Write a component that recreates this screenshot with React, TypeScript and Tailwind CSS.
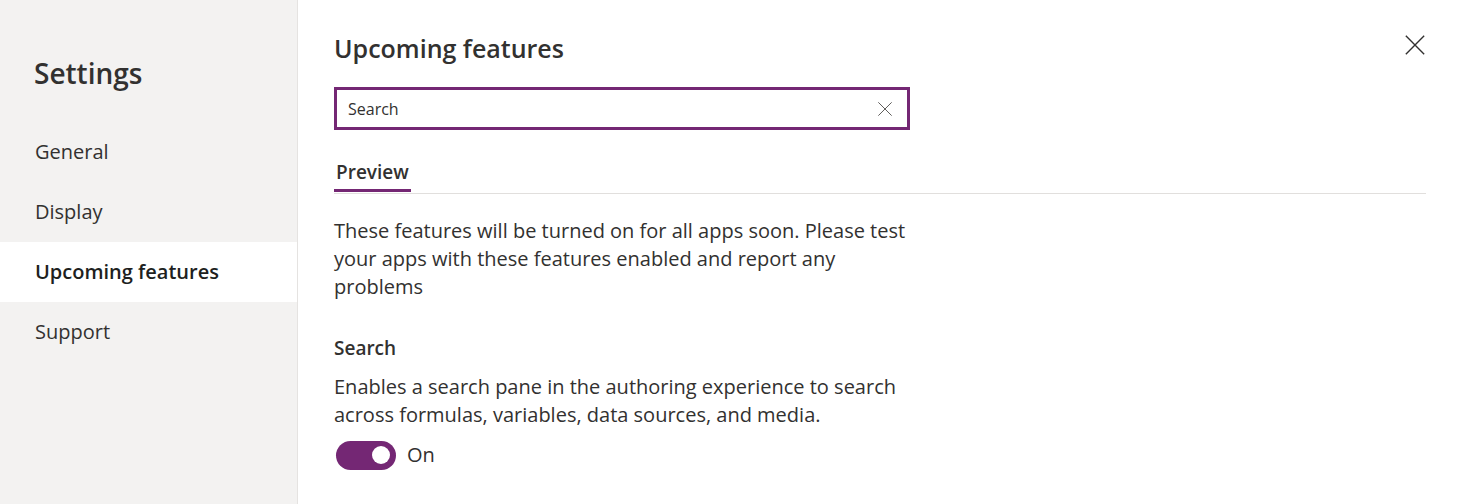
import { useState } from "react";

const navItems = ["General", "Display", "Upcoming features", "Support"];

function CloseIcon({ size, className }: { size: number; className?: string }) {
  return (
    <svg width={size} height={size} viewBox="0 0 24 24" className={className} fill="none">
      <path d="M2 2L22 22M22 2L2 22" stroke="currentColor" strokeWidth="1.5" />
    </svg>
  );
}

export default function App() {
  const [active, setActive] = useState("Upcoming features");
  const [query, setQuery] = useState("Search");
  const [enabled, setEnabled] = useState(true);

  return (
    <div
      className="flex h-[504px] w-[1460px] bg-white text-[#323130]"
      style={{ fontFamily: '"Open Sans", "Noto Sans", sans-serif' }}
    >
      {/* sidebar */}
      <aside className="w-[298px] shrink-0 border-r border-[#e5e3e1] bg-[#f3f2f1]">
        <h1 className="pl-[34px] pt-[53px] text-[28px] font-semibold leading-[40px]">Settings</h1>
        <nav className="mt-[29px] flex flex-col">
          {navItems.map((item) => (
            <button
              key={item}
              onClick={() => setActive(item)}
              className={
                "h-[60px] pl-[35px] text-left text-[20px] " +
                (active === item ? "bg-white font-semibold text-[#201f1e]" : "text-[#323130]")
              }
            >
              {item}
            </button>
          ))}
        </nav>
      </aside>

      {/* main */}
      <main className="relative flex-1 pl-[36px] pr-[34px]">
        <button className="absolute right-[34px] top-[34px] text-[#323130]">
          <CloseIcon size={22} />
        </button>

        <h2 className="pt-[30px] text-[25px] font-semibold leading-[36px]">Upcoming features</h2>

        <div className="mt-[21px] flex h-[43px] w-[576px] items-center border-[3px] border-[#742774] pl-[11px] pr-[14px]">
          <input
            value={query}
            onChange={(e) => setQuery(e.target.value)}
            className="flex-1 bg-transparent text-[16px] text-[#323130] outline-none"
          />
          <button onClick={() => setQuery("")} className="text-[#605e5c]">
            <CloseIcon size={16} />
          </button>
        </div>

        <div className="mt-[28px] border-b border-[#e1dfdd] pb-[1px]">
          <div className="inline-block border-b-[3px] border-[#742774] px-[2px] pb-[3px] text-[19px] font-semibold leading-[28px]">
            Preview
          </div>
        </div>

        <p className="mt-[23px] w-[575px] text-[20px] leading-[28px]">
          These features will be turned on for all apps soon. Please test your apps with these features enabled and
          report any problems
        </p>

        <h3 className="mt-[33px] text-[19px] font-semibold leading-[28px]">Search</h3>
        <p className="mt-[11px] w-[575px] text-[20px] leading-[28px]">
          Enables a search pane in the authoring experience to search across formulas, variables, data sources, and
          media.
        </p>

        <div className="mt-[11px] flex items-center gap-[11px]">
          <button
            onClick={() => setEnabled(!enabled)}
            className={
              "ml-[2px] flex h-[29px] w-[60px] items-center rounded-full px-[6px] " +
              (enabled ? "justify-end bg-[#742774]" : "justify-start border-2 border-[#605e5c] bg-white")
            }
          >
            <span className={"h-[18px] w-[18px] rounded-full " + (enabled ? "bg-white" : "bg-[#605e5c]")} />
          </button>
          <span className="text-[20px]">{enabled ? "On" : "Off"}</span>
        </div>
      </main>
    </div>
  );
}
